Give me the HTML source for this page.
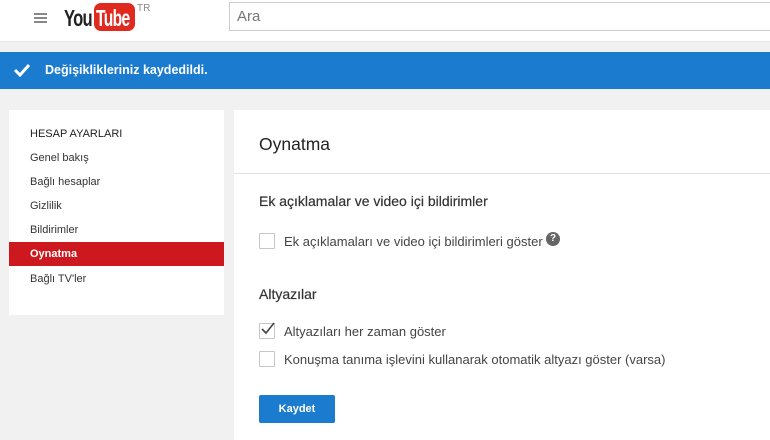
<!DOCTYPE html><html><head><meta charset="utf-8"><style>
body{margin:0;width:770px;height:440px;overflow:hidden;background:#f1f1f1;font-family:"Liberation Sans",Arial,sans-serif;position:relative}
.a{position:absolute}
.hdr{left:0;top:0;width:770px;height:41px;background:#fff;border-bottom:1px solid #e8e8e8}
.cb{width:14px;height:14px;border:1px solid #c6c6c6;background:#fff;border-radius:1px}
.side div{position:absolute;left:21px;font-size:11px;color:#333}
</style></head><body>
<div class="a hdr">
 <div class="a" style="left:34px;top:13px;width:13px;height:2px;background:#888;box-shadow:0 4px 0 #888,0 8px 0 #888"></div>
 <div class="a" style="left:64px;top:5px;font:bold 23px 'Liberation Sans',sans-serif;color:#222;letter-spacing:-1px;transform:scaleX(.72);transform-origin:left">You</div>
 <div class="a" style="left:94px;top:3px;width:41px;height:28px;background:#e02a20;border-radius:7px"></div>
 <div class="a" style="left:96px;top:5px;font:bold 23px 'Liberation Sans',sans-serif;color:#fff;letter-spacing:-1px;transform:scaleX(.68);transform-origin:left">Tube</div>
 <div class="a" style="left:137px;top:3px;font-size:10px;color:#888">TR</div>
 <div class="a" style="left:229px;top:2px;width:545px;height:29px;border:1px solid #ccc;box-sizing:border-box"></div>
 <div class="a" style="left:237px;top:8px;font-size:15px;color:#777">Ara</div>
</div>
<div class="a" style="left:0;top:52px;width:770px;height:37px;background:#1b7ccf"></div>
<svg class="a" style="left:13px;top:63px" width="18" height="14"><path d="M2 7l5 5 9-10" stroke="#fff" stroke-width="3" fill="none"/></svg>
<div class="a" style="left:45px;top:63px;font-size:12.5px;font-weight:bold;color:#fff">Değişiklikleriniz kaydedildi.</div>
<div class="a side" style="left:9px;top:110px;width:215px;height:205px;background:#fff">
 <div style="top:18px;color:#222">HESAP AYARLARI</div>
 <div style="top:42px">Genel bakış</div>
 <div style="top:66px">Bağlı hesaplar</div>
 <div style="top:90px">Gizlilik</div>
 <div style="top:114px">Bildirimler</div>
 <div style="top:132px;left:0;width:215px;height:24px;background:#cc181e"></div>
 <div style="top:138px;color:#fff;font-weight:bold">Oynatma</div>
 <div style="top:163px">Bağlı TV'ler</div>
</div>
<div class="a" style="left:234px;top:110px;width:536px;height:330px;background:#fff">
 <div class="a" style="left:25px;top:24px;font-size:17.5px;color:#222">Oynatma</div>
 <div class="a" style="left:0;top:63px;width:536px;height:1px;background:#e2e2e2"></div>
 <div class="a" style="left:25px;top:83px;font-size:14px;color:#333;-webkit-text-stroke:0.2px #333">Ek açıklamalar ve video içi bildirimler</div>
 <div class="a cb" style="left:25px;top:123px"></div>
 <div class="a" style="left:50px;top:124px;font-size:13px;color:#444">Ek açıklamaları ve video içi bildirimleri göster</div>
 <div class="a" style="left:312px;top:122px;width:14px;height:14px;border-radius:50%;background:#666;color:#fff;font:bold 10px/14px 'Liberation Sans';text-align:center">?</div>
 <div class="a" style="left:25px;top:176px;font-size:14px;color:#333;-webkit-text-stroke:0.2px #333">Altyazılar</div>
 <div class="a cb" style="left:25px;top:213px"></div>
 <svg class="a" style="left:26px;top:212px" width="16" height="14"><path d="M2 7l4 4 8-10" stroke="#444" stroke-width="1.6" fill="none"/></svg>
 <div class="a" style="left:50px;top:214px;font-size:13px;color:#444">Altyazıları her zaman göster</div>
 <div class="a cb" style="left:25px;top:241px"></div>
 <div class="a" style="left:50px;top:242px;font-size:13px;color:#444">Konuşma tanıma işlevini kullanarak otomatik altyazı göster (varsa)</div>
 <div class="a" style="left:25px;top:285px;width:76px;height:28px;background:#1b7ccf;border-radius:2px;color:#fff;font:bold 11px/28px 'Liberation Sans';text-align:center">Kaydet</div>
</div>
</body></html>
